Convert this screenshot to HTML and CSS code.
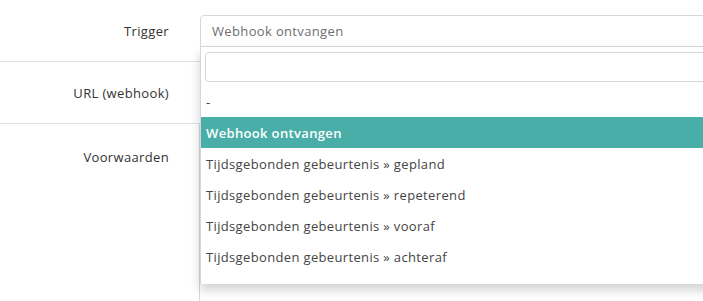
FILE: index.html
```html
<!DOCTYPE html>
<html>
<head>
    <title>Automatisering</title>
    <link rel="stylesheet" href="styles.css">
</head>
<body>
    <div class="form">
        <div class="row">
            <label class="label">Trigger</label>
            <div class="field">
                <div class="select open">
                    <span class="select-value">Webhook ontvangen</span>
                </div>
                <div class="dropdown">
                    <div class="search">
                        <input type="text" class="search-input">
                    </div>
                    <ul class="options">
                        <li class="option">-</li>
                        <li class="option active">Webhook ontvangen</li>
                        <li class="option">Tijdsgebonden gebeurtenis » gepland</li>
                        <li class="option">Tijdsgebonden gebeurtenis » repeterend</li>
                        <li class="option">Tijdsgebonden gebeurtenis » vooraf</li>
                        <li class="option">Tijdsgebonden gebeurtenis » achteraf</li>
                    </ul>
                </div>
            </div>
        </div>
        <div class="row">
            <label class="label">URL (webhook)</label>
            <div class="field">
                <input type="text" class="text-input">
            </div>
        </div>
        <div class="row last">
            <label class="label">Voorwaarden</label>
            <div class="field">
                <div class="conditions"></div>
            </div>
        </div>
    </div>
</body>
</html>
```

FILE: styles.css
```css
body {
    margin: 0;
    overflow: hidden;
    background: #fff;
    font-family: "Open Sans", sans-serif;
    font-size: 13px;
    letter-spacing: 0.35px;
    color: #333;
}

.form {
    width: 1000px;
}

.row {
    display: flex;
    align-items: center;
    border-bottom: 1px solid #dfe1e5;
    padding: 15px 0 14px;
}

.row.last {
    align-items: flex-start;
    border-bottom: none;
    padding: 0;
}

.label {
    width: 169px;
    padding-right: 31px;
    text-align: right;
    color: #333;
}

.row.last .label {
    padding-top: 24px;
}

.field {
    flex: 1;
    position: relative;
}

.select {
    height: 30px;
    border: 1px solid #d4d7dd;
    border-radius: 4px;
    display: flex;
    align-items: center;
    padding: 0 11px;
}

.select.open {
    border-bottom-left-radius: 0;
    border-bottom-right-radius: 0;
}

.select-value {
    color: #6c6f74;
}

.text-input {
    display: block;
    box-sizing: border-box;
    width: 100%;
    height: 32px;
    border: 1px solid #d4d7dd;
    border-radius: 4px;
}

.conditions {
    margin-left: -1px;
    height: 200px;
    border-left: 1px solid #d4d7dd;
}

.dropdown {
    position: absolute;
    top: 32px;
    left: 0;
    right: 0;
    z-index: 10;
    background: #fff;
    border-left: 1px solid #d4d7dd;
    box-shadow: 0 6px 10px rgba(0, 0, 0, 0.18);
    padding-bottom: 12px;
}

.search {
    padding: 5px 4px 4px;
}

.search-input {
    display: block;
    box-sizing: border-box;
    width: 100%;
    height: 30px;
    border: 1px solid #d4d7dd;
    border-radius: 4px;
}

.options {
    list-style: none;
    margin: 0;
    padding: 0;
}

.option {
    height: 31px;
    line-height: 32px;
    padding: 0 5px;
    color: #444;
}

.option.active {
    background: #48aea7;
    color: #fff;
    font-weight: 600;
}
```
